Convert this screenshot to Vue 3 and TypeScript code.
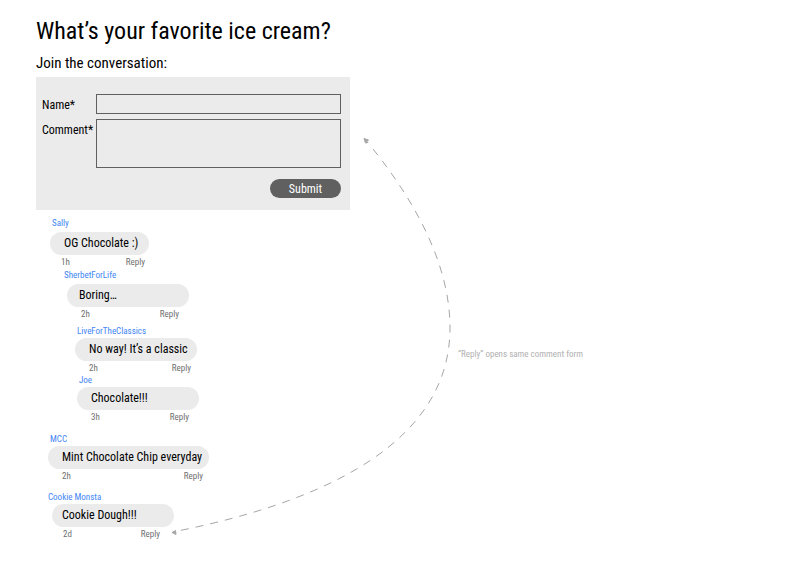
<script setup lang="ts">
import { ref } from 'vue'

interface Comment {
  id: string
  author: string
  text: string
  age: string
}

const comments: Comment[] = [
  { id: 'sally', author: 'Sally', text: 'OG Chocolate :)', age: '1h' },
  { id: 'sherbet', author: 'SherbetForLife', text: 'Boring…', age: '2h' },
  { id: 'classics', author: 'LiveForTheClassics', text: 'No way! It’s a classic', age: '2h' },
  { id: 'joe', author: 'Joe', text: 'Chocolate!!!', age: '3h' },
  { id: 'mcc', author: 'MCC', text: 'Mint Chocolate Chip everyday', age: '2h' },
  { id: 'cookie', author: 'Cookie Monsta', text: 'Cookie Dough!!!', age: '2d' },
]

const name = ref('')
const comment = ref('')
</script>

<template>
  <main class="page">
    <h1 class="title">What’s your favorite ice cream?</h1>
    <h2 class="subtitle">Join the conversation:</h2>

    <form class="form" @submit.prevent>
      <label class="label" for="name">Name*</label>
      <input id="name" v-model="name" class="field" type="text" required />
      <label class="label" for="comment">Comment*</label>
      <textarea id="comment" v-model="comment" class="field area" required></textarea>
      <button class="submit" type="submit">Submit</button>
    </form>

    <ul class="thread">
      <li v-for="c in comments" :key="c.id" class="comment" :class="c.id">
        <a class="author" href="#">{{ c.author }}</a>
        <p class="bubble">{{ c.text }}</p>
        <div class="meta">
          <span>{{ c.age }}</span>
          <button class="reply" type="button">Reply</button>
        </div>
      </li>
    </ul>

    <svg class="arrow" width="300" height="410" viewBox="165 130 300 410" aria-hidden="true">
      <path
        class="curve"
        d="M373 149C416 203 450 265 450 328C450 440 330 500 180 530.500"
      />
      <path class="head" d="M364 138.500L368.500 140L367 141.500L368 142.500L365.500 143Z" />
      <path class="head" d="M172 532.500L175.500 530.500L176 534.500Z" />
    </svg>
    <p class="note">“Reply” opens same comment form</p>
  </main>
</template>

<style>
body {
  margin: 0;
  background: #fff;
}
</style>

<style scoped>
.page {
  position: relative;
  padding: 16px 36px;
  color: #000;
  font-family: "Liberation Sans Narrow", "Arial Narrow", "Roboto Condensed", "Liberation Sans", sans-serif;
  font-size: 12px;
}

.title,
.subtitle {
  margin: 0;
  font-weight: 400;
}

.title {
  font-size: 24px;
  line-height: 30px;
}

.subtitle {
  padding: 7px 0 4px;
  font-size: 15px;
  line-height: 20px;
}

.form {
  display: grid;
  grid-template-columns: 54px 1fr;
  grid-template-rows: 20px 49px 25px;
  row-gap: 5px;
  box-sizing: border-box;
  max-width: 314px;
  padding: 17px 9px 12px 6px;
  background: #ebebeb;
}

.label {
  line-height: 22px;
}

.field {
  box-sizing: border-box;
  width: 100%;
  height: 20px;
  padding: 2px 4px;
  border: 1px solid #606060;
  border-radius: 0;
  background: transparent;
  font: inherit;
  outline: none;
}

.area {
  display: block;
  height: 49px;
  resize: none;
}

.submit {
  grid-column: 2;
  justify-self: end;
  width: 71px;
  height: 19px;
  margin-top: 6px;
  padding: 0;
  border: 0;
  border-radius: 10px;
  background: #606060;
  color: #fff;
  font: inherit;
}

.thread {
  display: flex;
  flex-direction: column;
  align-items: flex-start;
  margin: 7px 0 0;
  padding: 0;
  list-style: none;
}

.comment {
  width: 122px;
  font-size: 9px;
  line-height: 12px;
}

.author {
  display: block;
  padding: 0 0 1px 2px;
  color: #4285f4;
  text-decoration: none;
}

.bubble {
  margin: 0;
  padding: 0 14px;
  border-radius: 12px;
  background: #ebebeb;
  font-size: 12px;
  line-height: 23px;
  white-space: nowrap;
}

.meta {
  display: flex;
  justify-content: space-between;
  padding: 1px 10px 0 14px;
  color: #707070;
}

.reply {
  padding: 0;
  border: 0;
  background: none;
  color: inherit;
  font: inherit;
}

.sally {
  width: 99px;
  margin-left: 14px;
}

.sally .author,
.sherbet .author {
  padding-bottom: 3px;
}

.sally .meta {
  padding: 1px 4px 0 11px;
}

.sherbet {
  margin: 1px 0 0 31px;
}

.sherbet .author {
  margin-left: -5px;
}

.sherbet .bubble {
  padding-left: 12px;
}

.classics {
  margin: 5px 0 0 39px;
}

.classics .meta {
  padding-right: 6px;
}

.joe {
  margin-left: 41px;
}

.mcc {
  width: 161px;
  margin: 10px 0 0 12px;
}

.mcc .meta {
  padding-right: 6px;
}

.cookie {
  margin: 9px 0 0 16px;
}

.cookie .author {
  margin-left: -6px;
}

.cookie .bubble {
  padding-left: 10px;
}

.cookie .meta {
  padding: 1px 14px 0 11px;
}

.arrow {
  position: absolute;
  top: 130px;
  left: 165px;
  pointer-events: none;
}

.curve {
  fill: none;
  stroke: #a6a6a6;
  stroke-dasharray: 8 7;
}

.head {
  fill: #a6a6a6;
  stroke: #a6a6a6;
}

.note {
  position: absolute;
  top: 348px;
  left: 458px;
  margin: 0;
  color: #b0b0b0;
  font-size: 9px;
  line-height: 12px;
}
</style>
